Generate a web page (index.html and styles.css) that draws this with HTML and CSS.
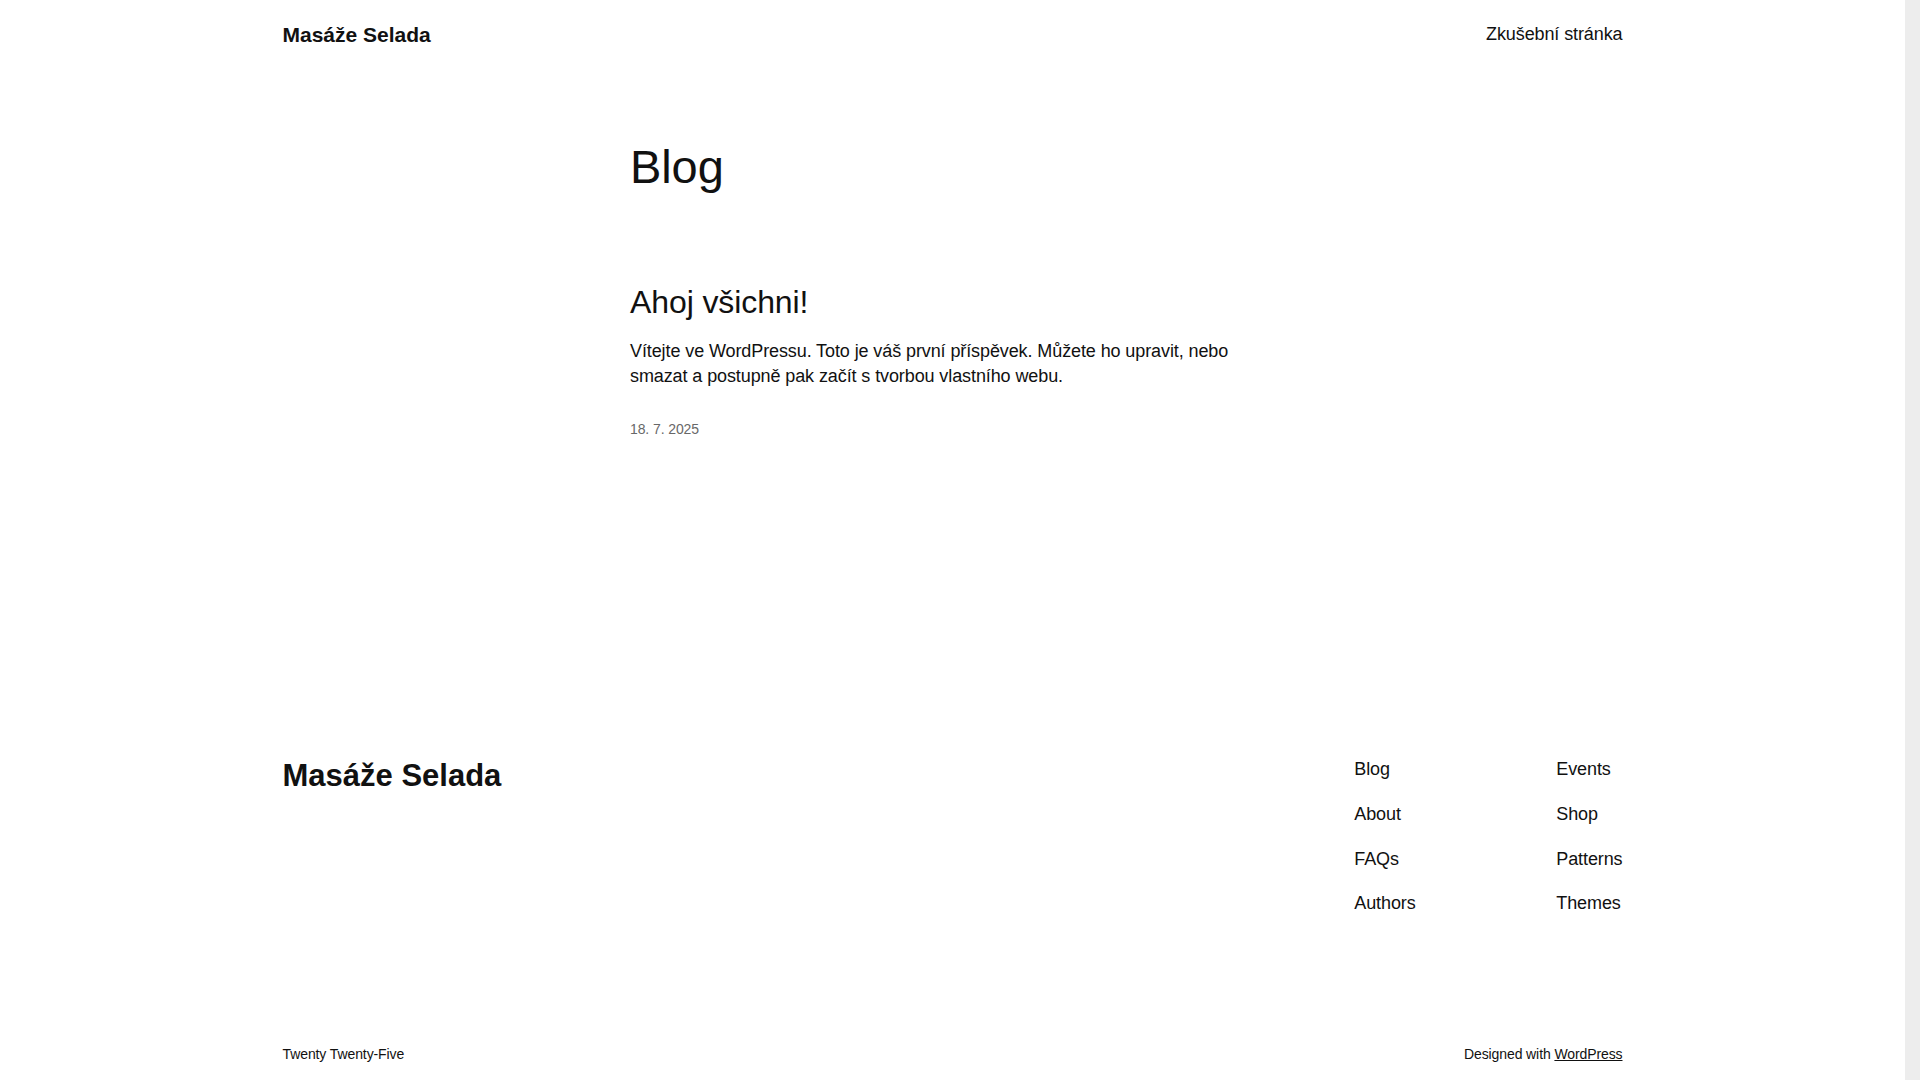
FILE: index.html
```html
<!DOCTYPE html>
<html lang="cs">
<head>
  <meta charset="UTF-8" />
  <meta name="viewport" content="width=device-width, initial-scale=1.0" />
  <title>Blog – Masáže Selada</title>
  <link rel="stylesheet" href="styles.css">
</head>
<body>

  <header class="site-header">
    <div class="wrap header-row">
      <a href="#" class="site-title">Masáže Selada</a>
      <nav class="top-nav">
        <a href="#">Zkušební stránka</a>
      </nav>
    </div>
  </header>

  <main class="content">
    <h1 class="page-title">Blog</h1>

    <article class="post">
      <h2 class="post-title"><a href="#">Ahoj všichni!</a></h2>
      <p class="post-excerpt">Vítejte ve WordPressu. Toto je váš první příspěvek. Můžete ho upravit, nebo smazat a postupně pak začít s tvorbou vlastního webu.</p>
      <time class="post-date" datetime="2025-07-18">18. 7. 2025</time>
    </article>
  </main>

  <footer class="site-footer">
    <div class="wrap footer-row">
      <a href="#" class="footer-title">Masáže Selada</a>
      <div class="footer-nav">
        <nav class="footer-col">
          <a href="#">Blog</a>
          <a href="#">About</a>
          <a href="#">FAQs</a>
          <a href="#">Authors</a>
        </nav>
        <nav class="footer-col">
          <a href="#">Events</a>
          <a href="#">Shop</a>
          <a href="#">Patterns</a>
          <a href="#">Themes</a>
        </nav>
      </div>
    </div>

    <div class="wrap credits">
      <p>Twenty Twenty-Five</p>
      <p>Designed with <a href="#">WordPress</a></p>
    </div>
  </footer>

  <div class="scrollbar"></div>

</body>
</html>
```

FILE: styles.css
```css
* {
  box-sizing: border-box;
}

body {
  margin: 0 15px 0 0;
  font-family: "Liberation Sans", Arial, sans-serif;
  font-size: 18px;
  line-height: 1.4;
  letter-spacing: -0.1px;
  color: #111;
  background: #fff;
}

a {
  color: inherit;
  text-decoration: none;
}

.wrap {
  max-width: 1340px;
  margin: 0 auto;
}

/* header */

.header-row {
  height: 70px;
  display: flex;
  align-items: center;
  justify-content: space-between;
}

.site-title {
  font-size: 21px;
  font-weight: 700;
  letter-spacing: 0;
}

.top-nav a {
  font-size: 18px;
}

/* content */

.content {
  width: 645px;
  margin: 69px auto 0;
}

.page-title {
  margin: 0;
  font-size: 47px;
  font-weight: 400;
  line-height: 1.2;
}

.post {
  margin-top: 88px;
}

.post-title {
  margin: 0;
  font-size: 32px;
  font-weight: 400;
  line-height: 1.2;
}

.post-excerpt {
  margin: 17px 0 0;
}

.post-date {
  display: block;
  margin-top: 31px;
  font-size: 14px;
  color: #686868;
}

/* footer */

.site-footer {
  margin-top: 317px;
  padding-bottom: 60px;
}

.footer-row {
  display: flex;
  justify-content: space-between;
  align-items: flex-start;
}

.footer-title {
  font-size: 31px;
  font-weight: 700;
  line-height: 1.2;
  letter-spacing: 0;
}

.footer-nav {
  display: grid;
  grid-template-columns: 202px auto;
}

.footer-col {
  display: flex;
  flex-direction: column;
  gap: 19.7px;
}

.credits {
  display: flex;
  justify-content: space-between;
  margin-top: 128px;
  font-size: 14px;
}

.credits p {
  margin: 0;
}

.credits a {
  text-decoration: underline;
}

.scrollbar {
  position: fixed;
  top: 0;
  right: 0;
  width: 15px;
  height: 100%;
  background: #ededed;
}
```
